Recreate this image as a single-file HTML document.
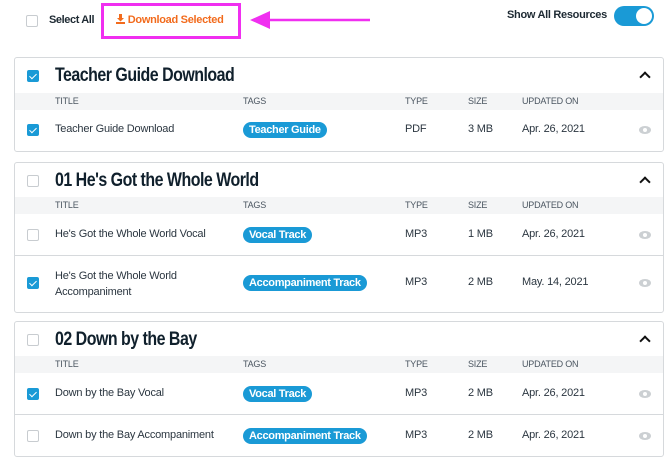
<!DOCTYPE html>
<html><head><style>
*{box-sizing:border-box;margin:0;padding:0}
body{width:670px;height:463px;background:#fff;font-family:"Liberation Sans",sans-serif;color:#1e2a33;position:relative;overflow:hidden}
.a{position:absolute}
.cb{position:absolute;width:12px;height:12px;border:1px solid #c8ccd0;border-radius:2px;background:#fff}
.cb.on{background:#1a9ad6;border-color:#1a9ad6}
.cb.on:after{content:"";position:absolute;left:3px;top:1px;width:3px;height:6px;border:solid #fff;border-width:0 1.6px 1.6px 0;transform:rotate(45deg)}
.card{position:absolute;left:14px;width:650px;border:1px solid #d6d9dc;border-radius:3px;background:#fff}
.h{position:absolute;left:40px;font-weight:bold;font-size:19px;letter-spacing:-0.6px;color:#10202c;transform:scaleX(.84);transform-origin:left;white-space:nowrap}
.band{position:absolute;left:0;right:0;height:17px;background:#f4f5f6}
.band span{position:absolute;top:3px;font-size:9px;letter-spacing:-0.2px;color:#4a5560}
.t{position:absolute;font-size:11px;letter-spacing:-0.2px;color:#2b3640}
.pill{position:absolute;height:16px;border-radius:8px;background:#1a9ad6;color:#fff;font-weight:bold;font-size:11px;line-height:16px;padding:0 6px;letter-spacing:-0.3px}
.chev{position:absolute;right:14px;width:8px;height:8px;border:solid #111;border-width:2px 0 0 2px;transform:rotate(45deg)}
.eye{position:absolute;right:12px;width:12px;height:8px;border-radius:50%;background:#ccd0d3}
.eye:after{content:"";position:absolute;left:4px;top:2px;width:4px;height:4px;border-radius:50%;background:#fff}
.div{position:absolute;left:0;right:0;height:1px;background:#d6d9dc}
</style></head><body>
<div class="cb" style="left:26px;top:15px"></div>
<div class="a" style="left:49px;top:14px;font-size:11px;font-weight:bold;letter-spacing:-0.4px">Select All</div>
<div class="a" style="left:101px;top:3px;width:140px;height:36px;border:3px solid #f02ff0"></div>
<div class="a" style="left:116px;top:14px;font-size:11px;font-weight:bold;color:#f26b1d;letter-spacing:-0.3px">
<svg width="9" height="10" viewBox="0 0 9 10" style="vertical-align:-1px"><path d="M3 0h3v4h2L4.5 7.5 1 4h2z M0 8h9v2H0z" fill="#f26b1d"/></svg> Download Selected</div>
<svg class="a" style="left:248px;top:10px" width="125" height="22"><path d="M14 10H122" stroke="#f02ff0" stroke-width="2.5"/><path d="M2 10L22 1V19z" fill="#f02ff0"/></svg>
<div class="a" style="left:507px;top:9px;font-size:11px;font-weight:bold;letter-spacing:-0.3px">Show All Resources</div>
<div class="a" style="left:614px;top:6px;width:40px;height:20px;border-radius:10px;background:#1a9ad6"><div class="a" style="right:2px;top:2px;width:16px;height:16px;border-radius:50%;background:#fff"></div></div>

<div class="card" style="top:57px;height:95px">
 <div class="cb on" style="left:12px;top:12px"></div>
 <div class="h" style="top:7px">Teacher Guide Download</div>
 <div class="chev" style="top:15px"></div>
 <div class="band" style="top:35px"><span style="left:40px">TITLE</span><span style="left:228px">TAGS</span><span style="left:390px">TYPE</span><span style="left:453px">SIZE</span><span style="left:507px">UPDATED ON</span></div>
 <div class="cb on" style="left:12px;top:66px"></div>
 <div class="t" style="left:40px;top:65px">Teacher Guide Download</div>
 <div class="pill" style="left:228px;top:64px">Teacher Guide</div>
 <div class="t" style="left:390px;top:65px">PDF</div><div class="t" style="left:453px;top:65px">3 MB</div><div class="t" style="left:507px;top:65px">Apr. 26, 2021</div>
 <div class="eye" style="top:68px"></div>
</div>

<div class="card" style="top:162px;height:151px">
 <div class="cb" style="left:12px;top:12px"></div>
 <div class="h" style="top:7px">01 He's Got the Whole World</div>
 <div class="chev" style="top:15px"></div>
 <div class="band" style="top:34px"><span style="left:40px">TITLE</span><span style="left:228px">TAGS</span><span style="left:390px">TYPE</span><span style="left:453px">SIZE</span><span style="left:507px">UPDATED ON</span></div>
 <div class="cb" style="left:12px;top:66px"></div>
 <div class="t" style="left:40px;top:65px">He's Got the Whole World Vocal</div>
 <div class="pill" style="left:228px;top:64px">Vocal Track</div>
 <div class="t" style="left:390px;top:65px">MP3</div><div class="t" style="left:453px;top:65px">1 MB</div><div class="t" style="left:507px;top:65px">Apr. 26, 2021</div>
 <div class="eye" style="top:68px"></div>
 <div class="div" style="top:92px"></div>
 <div class="cb on" style="left:12px;top:114px"></div>
 <div class="t" style="left:40px;top:105px;line-height:16px">He's Got the Whole World<br>Accompaniment</div>
 <div class="pill" style="left:228px;top:112px">Accompaniment Track</div>
 <div class="t" style="left:390px;top:113px">MP3</div><div class="t" style="left:453px;top:113px">2 MB</div><div class="t" style="left:507px;top:113px">May. 14, 2021</div>
 <div class="eye" style="top:116px"></div>
</div>

<div class="card" style="top:321px;height:136px">
 <div class="cb" style="left:12px;top:12px"></div>
 <div class="h" style="top:7px">02 Down by the Bay</div>
 <div class="chev" style="top:15px"></div>
 <div class="band" style="top:34px"><span style="left:40px">TITLE</span><span style="left:228px">TAGS</span><span style="left:390px">TYPE</span><span style="left:453px">SIZE</span><span style="left:507px">UPDATED ON</span></div>
 <div class="cb on" style="left:12px;top:66px"></div>
 <div class="t" style="left:40px;top:65px">Down by the Bay Vocal</div>
 <div class="pill" style="left:228px;top:64px">Vocal Track</div>
 <div class="t" style="left:390px;top:65px">MP3</div><div class="t" style="left:453px;top:65px">2 MB</div><div class="t" style="left:507px;top:65px">Apr. 26, 2021</div>
 <div class="eye" style="top:68px"></div>
 <div class="div" style="top:92px"></div>
 <div class="cb" style="left:12px;top:108px"></div>
 <div class="t" style="left:40px;top:107px">Down by the Bay Accompaniment</div>
 <div class="pill" style="left:228px;top:106px">Accompaniment Track</div>
 <div class="t" style="left:390px;top:107px">MP3</div><div class="t" style="left:453px;top:107px">2 MB</div><div class="t" style="left:507px;top:107px">Apr. 26, 2021</div>
 <div class="eye" style="top:110px"></div>
</div>
</body></html>
